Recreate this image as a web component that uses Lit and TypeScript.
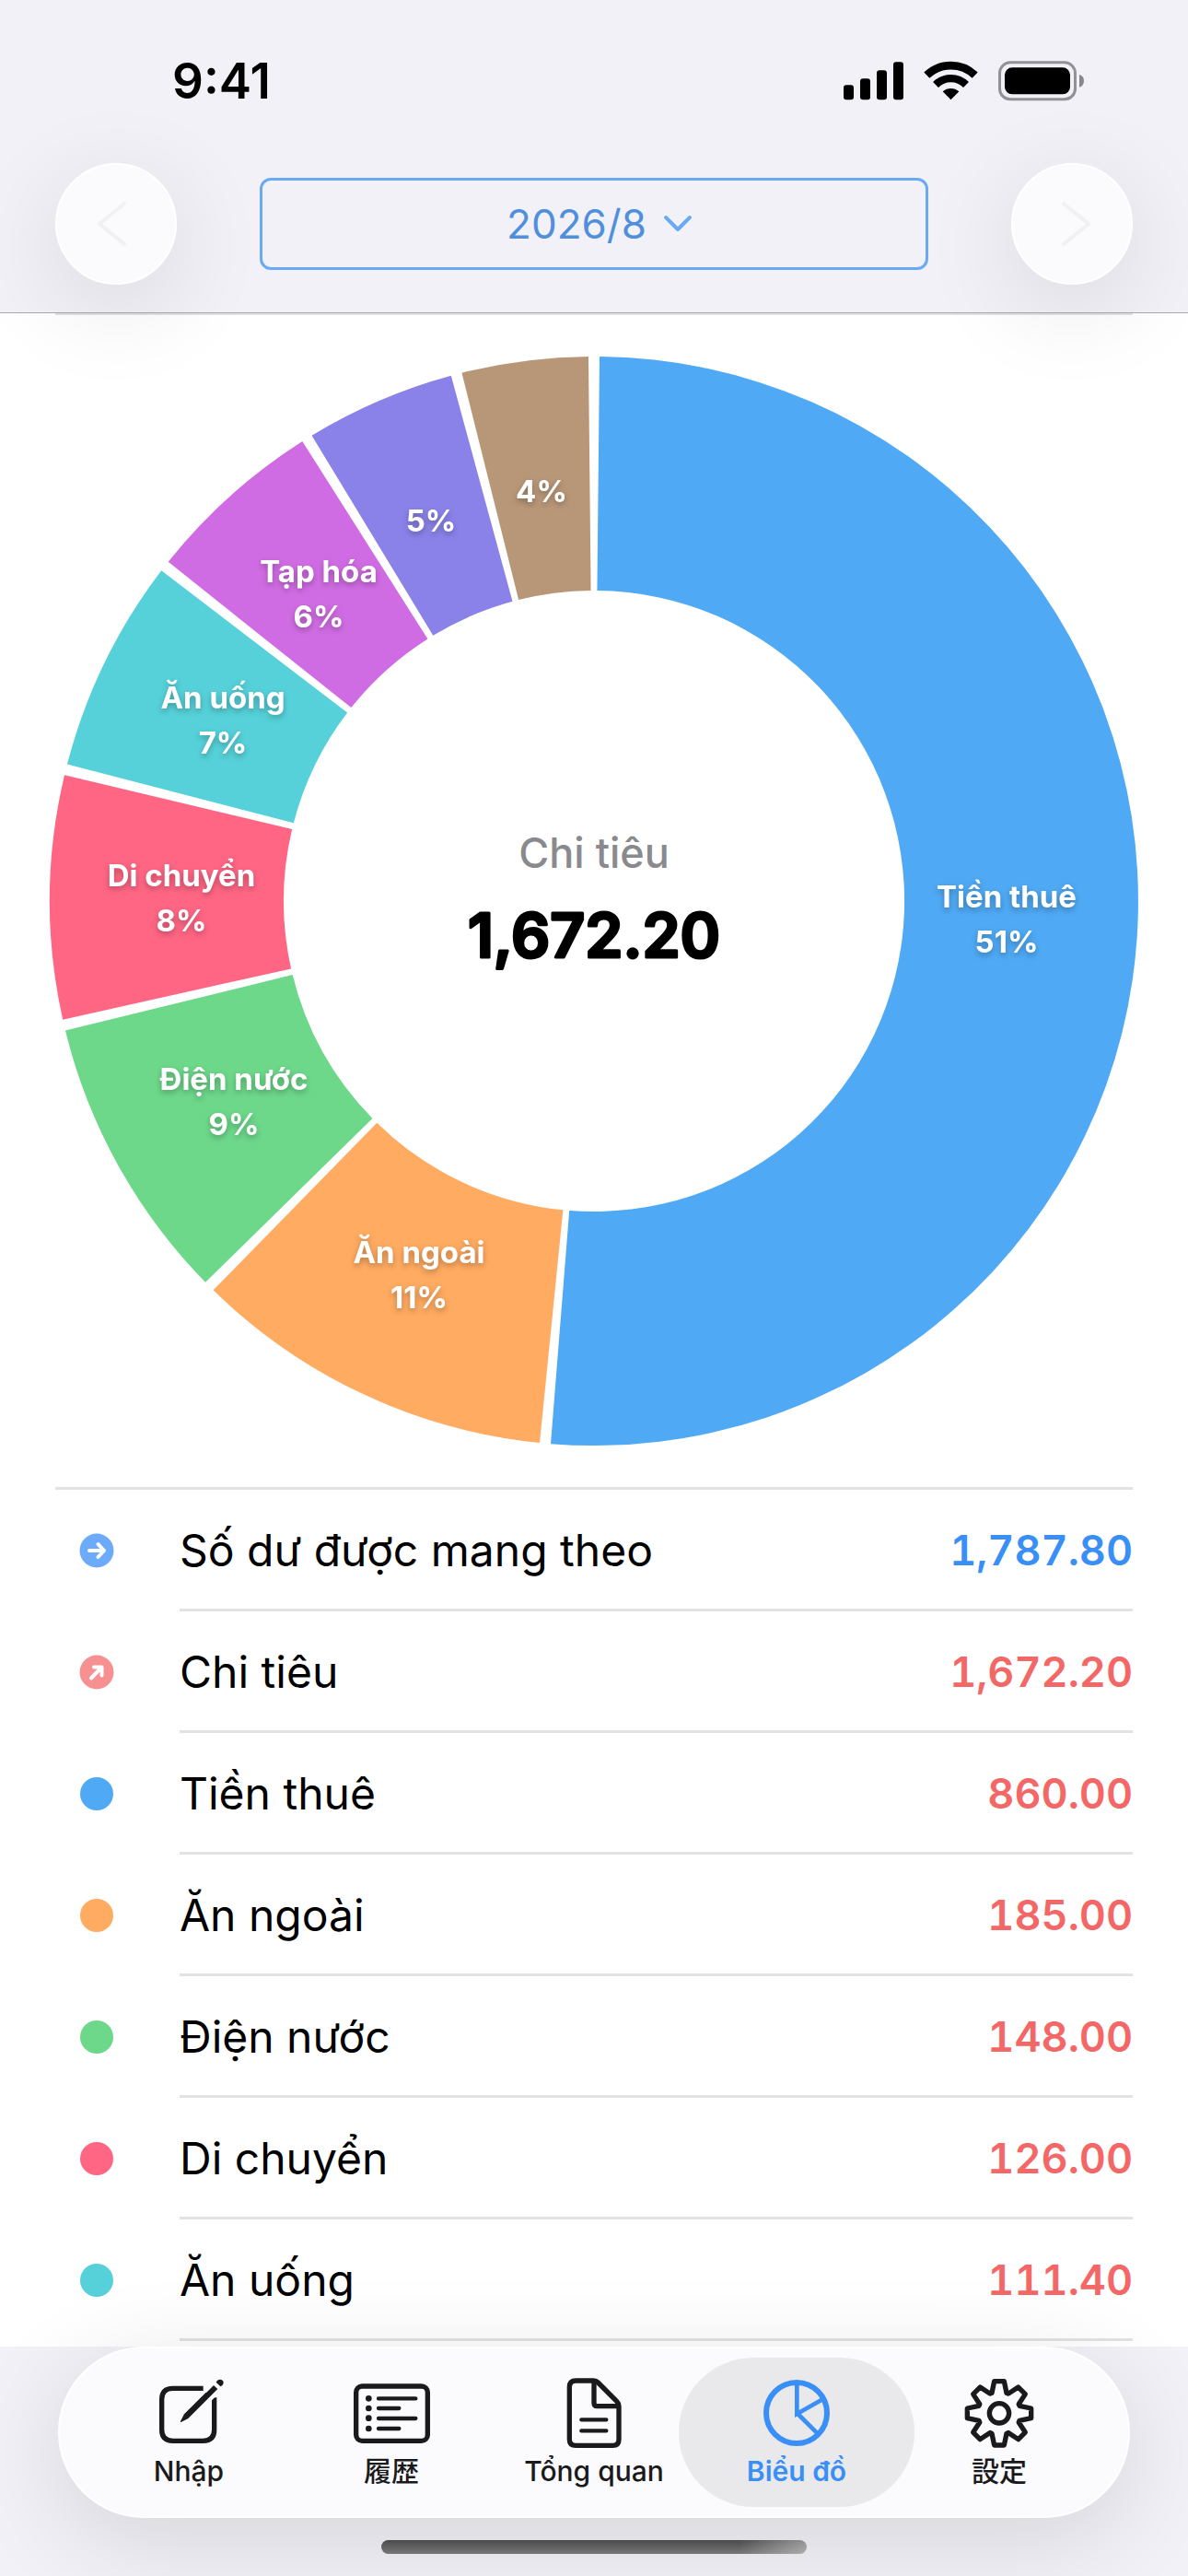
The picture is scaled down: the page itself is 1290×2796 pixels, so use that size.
import { LitElement, html, svg, css, nothing } from "lit";
import { customElement, property, state } from "lit/decorators.js";
import { classMap } from "lit/directives/class-map.js";

interface Slice {
  name: string;
  amount: number;
  color: string;
  showName: boolean;
}

const SLICES: Slice[] = [
  { name: "Tiền thuê", amount: 860, color: "#4fa9f4", showName: true },
  { name: "Ăn ngoài", amount: 185, color: "#ffab61", showName: true },
  { name: "Điện nước", amount: 148, color: "#6dd88a", showName: true },
  { name: "Di chuyển", amount: 126, color: "#ff6684", showName: true },
  { name: "Ăn uống", amount: 111.4, color: "#56d1d9", showName: true },
  { name: "Tạp hóa", amount: 94, color: "#d06ce3", showName: true },
  { name: "", amount: 79.8, color: "#8a82e8", showName: false },
  { name: "", amount: 68, color: "#b89778", showName: false },
];

const money = (value: number) =>
  value.toLocaleString("en-US", {
    minimumFractionDigits: 2,
    maximumFractionDigits: 2,
  });

@customElement("status-bar")
export class StatusBar extends LitElement {
  static styles = css`
    :host {
      display: flex;
      justify-content: space-between;
      align-items: center;
      padding: 56px 112px 0 187px;
      height: 64px;
      color: #000;
    }
    .clock {
      font-size: 53px;
      line-height: 64px;
      font-weight: 600;
    }
    .signals {
      display: block;
      width: 262px;
      height: 44px;
    }
  `;

  render() {
    return html`
      <span class="clock">9:41</span>
      <svg class="signals" viewBox="168 74 786 132" aria-hidden="true">
        <rect x="168" y="153" width="33" height="48" rx="9" />
        <rect x="222" y="132" width="33" height="69" rx="9" />
        <rect x="276" y="105" width="33" height="96" rx="9" />
        <rect x="330" y="78" width="33" height="123" rx="9" />
        <g fill="none" stroke="#000">
          <path d="M439 121 A113 113 0 0 1 596 121" stroke-width="26" />
          <path d="M468 152 A70 70 0 0 1 567 152" stroke-width="25" />
        </g>
        <path d="M517.500 201 L491 174 A40 40 0 0 1 544 174 Z" />
        <rect
          x="676.500"
          y="79.500"
          width="246"
          height="120"
          rx="35"
          fill="none"
          stroke="#929296"
          stroke-width="9"
        />
        <rect x="693" y="96" width="213" height="87" rx="24" />
        <path d="M936 119 Q951 124 951 139 Q951 155 936 160 Z" fill="#88888c" />
      </svg>
    `;
  }
}

@customElement("month-bar")
export class MonthBar extends LitElement {
  static styles = css`
    :host {
      display: flex;
      align-items: center;
      justify-content: space-between;
      padding: 0 60px 30px;
    }
    button {
      appearance: none;
      margin: 0;
      padding: 0;
      font: inherit;
      cursor: pointer;
    }
    .step {
      display: grid;
      place-items: center;
      box-sizing: border-box;
      width: 132px;
      height: 132px;
      border: 2px solid #fff;
      border-radius: 50%;
      background: #fbfbfd;
      box-shadow: 0 24px 108px rgba(0, 0, 0, 0.11);
    }
    .step svg {
      width: 60px;
      height: 60px;
      fill: none;
      stroke: #f1f1f3;
      stroke-width: 4;
      stroke-linecap: round;
      stroke-linejoin: round;
    }
    .month {
      flex: 1;
      display: flex;
      align-items: center;
      justify-content: center;
      gap: 18px;
      box-sizing: border-box;
      height: 100px;
      margin: 0 90px;
      padding-left: 12px;
      border: 3px solid #6aaaf5;
      border-radius: 12px;
      background: transparent;
      color: #4f8fdc;
      font-size: 44px;
      line-height: 54px;
    }
    .month svg {
      width: 32px;
      height: 20px;
      fill: none;
      stroke: #6aaaf5;
      stroke-width: 4;
      stroke-linecap: round;
      stroke-linejoin: round;
    }
  `;

  render() {
    return html`
      <button class="step" aria-label="Previous month">
        <svg viewBox="-30 -30 60 60"><path d="M9 -22 L-18 0 L9 22" /></svg>
      </button>
      <button class="month">
        <span>2026/8</span>
        <svg viewBox="0 0 32 20"><path d="M3 3 L16 16 L29 3" /></svg>
      </button>
      <button class="step" aria-label="Next month">
        <svg viewBox="-30 -30 60 60"><path d="M-9 -22 L18 0 L-9 22" /></svg>
      </button>
    `;
  }
}

@customElement("expense-donut")
export class ExpenseDonut extends LitElement {
  @property({ attribute: false }) slices: Slice[] = [];

  static styles = css`
    :host {
      display: block;
    }
    .chart {
      display: block;
      width: 100%;
      overflow: visible;
      text-anchor: middle;
    }
    .label {
      fill: #fff;
      font-size: 33px;
      font-weight: 700;
      filter: drop-shadow(0 3px 3px rgba(0, 0, 0, 0.28));
    }
    .caption {
      fill: #8a8a8e;
      font-size: 45px;
      font-weight: 500;
    }
    .total {
      fill: #000;
      stroke: #000;
      stroke-width: 3;
      stroke-linejoin: round;
      font-size: 66px;
      font-weight: 600;
    }
  `;

  private readonly outer = 591;
  private readonly inner = 337;
  private readonly labelRadius = 448;
  private readonly halfGap = 0.0102;

  private point(radius: number, angle: number) {
    const x = radius * Math.sin(angle);
    const y = -radius * Math.cos(angle);
    return `${x.toFixed(2)} ${y.toFixed(2)}`;
  }

  private arc(from: number, to: number) {
    const a = from + this.halfGap;
    const b = to - this.halfGap;
    const large = b - a > Math.PI ? 1 : 0;
    return [
      `M${this.point(this.outer, a)}`,
      `A${this.outer} ${this.outer} 0 ${large} 1 ${this.point(this.outer, b)}`,
      `L${this.point(this.inner, b)}`,
      `A${this.inner} ${this.inner} 0 ${large} 0 ${this.point(this.inner, a)}`,
      "Z",
    ].join(" ");
  }

  render() {
    const total = this.slices.reduce((sum, s) => sum + s.amount, 0);
    let run = 0;
    const placed = this.slices.map((s) => {
      const from = (run / total) * 2 * Math.PI;
      run += s.amount;
      const to = (run / total) * 2 * Math.PI;
      const mid = (from + to) / 2;
      return {
        ...s,
        path: this.arc(from, to),
        x: Math.round(this.labelRadius * Math.sin(mid)),
        y: Math.round(-this.labelRadius * Math.cos(mid)),
        share: `${Math.round((s.amount / total) * 100)}%`,
      };
    });
    return html`
      <svg class="chart" viewBox="-585 -591 1170 1182" role="img" aria-label="Chi tiêu">
        ${placed.map((p) => svg`<path d=${p.path} fill=${p.color} />`)}
        ${placed.map((p) =>
          p.showName
            ? svg`
              <text class="label" x=${p.x} y=${p.y - 13}>${p.name}</text>
              <text class="label" x=${p.x} y=${p.y + 36}>${p.share}</text>`
            : svg`<text class="label" x=${p.x} y=${p.y + 11}>${p.share}</text>`
        )}
        <text class="caption" x="0" y="-36">Chi tiêu</text>
        <text class="total" x="0" y="61">${money(total)}</text>
      </svg>
    `;
  }
}

@customElement("balance-row")
export class BalanceRow extends LitElement {
  @property() label = "";
  @property() amount = "";
  @property() kind: "carry" | "spent" | "category" = "category";
  @property() color = "";

  static styles = css`
    :host {
      display: flex;
      align-items: stretch;
    }
    .mark {
      flex: none;
      display: flex;
      align-items: center;
      box-sizing: border-box;
      width: 135px;
      padding-left: 26px;
    }
    .mark svg {
      width: 38px;
      height: 38px;
    }
    .body {
      flex: 1;
      display: flex;
      align-items: center;
      justify-content: space-between;
      box-sizing: border-box;
      height: 132px;
      padding-top: 3px;
      border-bottom: 3px solid #e2e2e2;
    }
    .name {
      font-size: 48px;
      line-height: 60px;
      color: #000;
    }
    .amount {
      font-size: 45px;
      line-height: 60px;
      font-weight: 600;
      font-variant-numeric: tabular-nums;
      color: #f46767;
    }
    .amount.carry {
      color: #3a8ff7;
    }
    .arrow {
      fill: none;
      stroke: #fff;
      stroke-width: 4;
      stroke-linecap: round;
      stroke-linejoin: round;
    }
  `;

  private mark() {
    switch (this.kind) {
      case "carry":
        return svg`
          <circle r="18.500" fill="#6cabf9" />
          <path class="arrow" d="M-8 0 H8 M1.500 -7 L8 0 L1.500 7" />`;
      case "spent":
        return svg`
          <circle r="18.500" fill="#f79090" />
          <path class="arrow" d="M-6 6.500 L5.500 -5.500 M-3 -5.500 H5.500 V3.500" />`;
      default:
        return svg`<circle r="18" fill=${this.color} />`;
    }
  }

  render() {
    return html`
      <span class="mark">
        <svg viewBox="-19 -19 38 38" aria-hidden="true">${this.mark()}</svg>
      </span>
      <span class="body">
        <span class="name">${this.label}</span>
        <span class=${classMap({ amount: true, carry: this.kind === "carry" })}
          >${this.amount}</span
        >
      </span>
    `;
  }
}

const gearPath = (cx: number, cy: number) => {
  const tooth = [
    [-24, -66],
    [-16, -104],
    [16, -104],
    [24, -66],
  ];
  const points: string[] = [];
  for (let k = 0; k < 8; k++) {
    const a = (k * Math.PI) / 4;
    for (const [x, y] of tooth) {
      const px = cx + x * Math.cos(a) - y * Math.sin(a);
      const py = cy + x * Math.sin(a) + y * Math.cos(a);
      points.push(`${px.toFixed(1)} ${py.toFixed(1)}`);
    }
  }
  return `M${points.join(" L")} Z`;
};

const TABS = [
  {
    id: "input",
    label: "Nhập",
    viewBox: "36 39 252 240",
    icon: svg`
      <path d="M209 82 H110 Q74 82 74 118 V217 Q74 253 110 253 H209 Q245 253 245 217 V112" />
      <path d="M203 103 L236 70 L262 96 L229 129 Z" class="knock" />
      <path class="solid" d="M242 71 L256 84 L160 180 L137 192 Q134 193 135 189 L147 166 Z" />
      <path class="knock" d="M212 92 L240 64 L243 72 L220 95 Z" />
      <path class="solid" d="M251 62 L265 76 Q275 71 275 62 Q274 54 264 53 Q255 53 251 62 Z" />`,
  },
  {
    id: "history",
    label: "履歴",
    viewBox: "696 39 252 240",
    icon: svg`
      <rect x="707" y="75" width="233" height="178" rx="20" />
      <g class="solid">
        <circle cx="748" cy="115" r="10" />
        <circle cx="748" cy="147" r="10" />
        <circle cx="748" cy="179" r="10" />
        <circle cx="748" cy="213" r="10" />
      </g>
      <path class="thin" d="M780 115 H901 M780 147 H847 M780 180 H901 M780 213 H847" />`,
  },
  {
    id: "overview",
    label: "Tổng quan",
    viewBox: "9 39 252 240",
    icon: svg`
      <path d="M76 57 H134 Q142 57 148 63 L209 124 Q216 131 216 140 V248 Q216 268 196 268 H76 Q55 268 55 248 V78 Q55 57 76 57 Z" />
      <path d="M135 60 V130 Q135 140 145 140 H213" />
      <path class="thin" d="M94 184 H175 M94 220 H175" />`,
  },
  {
    id: "chart",
    label: "Biểu đồ",
    viewBox: "672 39 252 240",
    icon: svg`
      <circle class="ring" cx="798" cy="162" r="99" />
      <path class="butt" d="M799 64 V165 L884 117 M799 162 L867 230" />`,
  },
  {
    id: "settings",
    label: "設定",
    viewBox: "1330 39 252 240",
    icon: svg`
      <path d=${gearPath(1456, 163)} />
      <circle cx="1456" cy="163" r="32" />`,
  },
];

@customElement("tab-bar")
export class TabBar extends LitElement {
  @state() private current = "chart";

  static styles = css`
    :host {
      display: block;
      padding: 0 63px 24px;
    }
    .pill {
      display: flex;
      box-sizing: border-box;
      height: 186px;
      padding: 10px 30px;
      border: 2px solid #fff;
      border-radius: 93px;
      background: #fbfbfd;
      box-shadow: 0 24px 108px rgba(0, 0, 0, 0.12);
    }
    .tab {
      appearance: none;
      flex: 1;
      display: flex;
      flex-direction: column;
      align-items: center;
      min-width: 0;
      margin: 0;
      padding: 19px 0 0;
      border: 0;
      background: none;
      color: #1a1a1c;
      font: inherit;
      font-size: 30px;
      line-height: 40px;
      font-weight: 500;
      white-space: nowrap;
      cursor: pointer;
    }
    .tab.active {
      margin: 0 -18px;
      padding: 19px 18px 0;
      border-radius: 81px;
      background: #e9e9eb;
      color: #3a8ff7;
      font-weight: 600;
    }
    .tab svg {
      width: 84px;
      height: 80px;
      margin-bottom: 4px;
      overflow: visible;
      fill: none;
      stroke: currentColor;
      stroke-width: 16;
      stroke-linejoin: round;
      stroke-linecap: butt;
    }
    .solid {
      fill: currentColor;
      stroke: none;
    }
    .knock {
      fill: #fbfbfd;
      stroke: none;
    }
    .thin {
      stroke-width: 13;
      stroke-linecap: round;
    }
    .ring {
      stroke-width: 18;
    }
    .butt {
      stroke-width: 14;
      stroke-linejoin: miter;
    }
  `;

  render() {
    return html`
      <nav class="pill">
        ${TABS.map(
          (t) => html`
            <button
              class=${classMap({ tab: true, active: t.id === this.current })}
              aria-current=${t.id === this.current ? "page" : nothing}
              @click=${() => (this.current = t.id)}
            >
              <svg viewBox=${t.viewBox} aria-hidden="true">${t.icon}</svg>
              <span>${t.label}</span>
            </button>
          `
        )}
      </nav>
    `;
  }
}

@customElement("app-root")
export class AppRoot extends LitElement {
  static styles = css`
    :host {
      display: flex;
      flex-direction: column;
      min-height: 100vh;
      overflow: hidden;
      background: #fff;
      font-family: Inter, "Noto Sans CJK JP", "Liberation Sans", sans-serif;
    }
    .top {
      position: relative;
      z-index: 1;
      display: flex;
      flex-direction: column;
      gap: 57px;
      border-bottom: 1px solid #a9a9ad;
      background: #f2f1f7;
    }
    .content {
      flex: 1;
      margin-top: -1px;
      padding: 0 60px 6px;
    }
    .chart {
      padding: 45px 0;
      border-top: 3px solid #e2e2e2;
      border-bottom: 3px solid #e2e2e2;
    }
    .rows {
      margin: 0;
      padding: 0;
      list-style: none;
    }
    .bottom {
      position: relative;
      z-index: 1;
      padding-bottom: 24px;
      background: #f2f1f7;
    }
    .home {
      position: relative;
      width: 462px;
      max-width: 60%;
      height: 15px;
      margin: 0 auto;
      border-radius: 8px;
      background: linear-gradient(to right, transparent 84%, rgba(255, 255, 255, 0.4)),
        linear-gradient(#4a4a4a, #777);
    }
  `;

  render() {
    const total = SLICES.reduce((sum, s) => sum + s.amount, 0);
    return html`
      <header class="top">
        <status-bar></status-bar>
        <month-bar></month-bar>
      </header>
      <main class="content">
        <section class="chart">
          <expense-donut .slices=${SLICES}></expense-donut>
        </section>
        <ul class="rows">
          <li>
            <balance-row
              kind="carry"
              label="Số dư được mang theo"
              amount=${money(1787.8)}
            ></balance-row>
          </li>
          <li>
            <balance-row kind="spent" label="Chi tiêu" amount=${money(total)}></balance-row>
          </li>
          ${SLICES.slice(0, 5).map(
            (s) => html`
              <li>
                <balance-row
                  label=${s.name}
                  amount=${money(s.amount)}
                  color=${s.color}
                ></balance-row>
              </li>
            `
          )}
        </ul>
      </main>
      <footer class="bottom">
        <tab-bar></tab-bar>
        <div class="home"></div>
      </footer>
    `;
  }
}
